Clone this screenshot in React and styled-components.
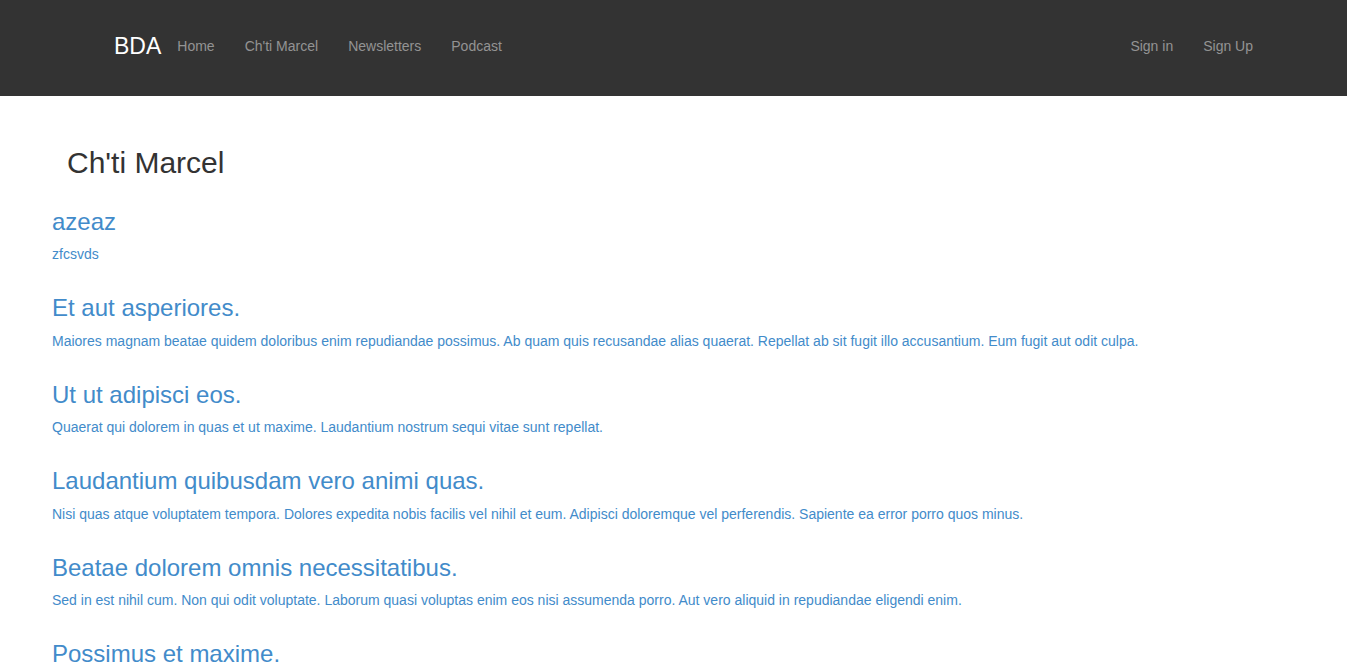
import React from 'react';
import styled, { createGlobalStyle } from 'styled-components';

const Global = createGlobalStyle`
  body {
    margin: 0;
    font-family: "Liberation Sans", Arial, Helvetica, sans-serif;
    font-size: 14px;
    line-height: 1.42857;
    color: #333;
    background: #fff;
  }
`;

const Navbar = styled.nav`
  background: #333333;
  height: 96px;
  box-sizing: border-box;
  padding: 0 79px 4px 114px;
  display: flex;
  align-items: center;
`;

const Brand = styled.a`
  color: #fff;
  font-size: 23px;
  line-height: 1;
  text-decoration: none;
  margin-right: 1px;
`;

const NavList = styled.ul`
  list-style: none;
  margin: 0;
  padding: 0;
  display: flex;
  margin-left: ${p => (p.right ? 'auto' : '0')};
`;

const NavLink = styled.a`
  display: block;
  padding: 0 15px;
  color: #939393;
  font-size: 14px;
  line-height: 20px;
  text-decoration: none;
`;

const Main = styled.main`
  padding: 30px 52px 0;
`;

const PageTitle = styled.h2`
  margin: 20px 0 10px 15px;
  font-size: 30px;
  font-weight: 500;
  line-height: 1.1;
  color: #333;
`;

const Post = styled.article`
  display: flow-root;
`;

const PostTitle = styled.h3`
  margin: 20px 0 10px;
  font-size: 24px;
  font-weight: 500;
  line-height: 1.1;
  color: #428bca;
`;

const PostBody = styled.p`
  margin: 0 0 10px;
  color: #428bca;
`;

const posts = [
  ['azeaz', 'zfcsvds'],
  [
    'Et aut asperiores.',
    'Maiores magnam beatae quidem doloribus enim repudiandae possimus. Ab quam quis recusandae alias quaerat. Repellat ab sit fugit illo accusantium. Eum fugit aut odit culpa.',
  ],
  [
    'Ut ut adipisci eos.',
    'Quaerat qui dolorem in quas et ut maxime. Laudantium nostrum sequi vitae sunt repellat.',
  ],
  [
    'Laudantium quibusdam vero animi quas.',
    'Nisi quas atque voluptatem tempora. Dolores expedita nobis facilis vel nihil et eum. Adipisci doloremque vel perferendis. Sapiente ea error porro quos minus.',
  ],
  [
    'Beatae dolorem omnis necessitatibus.',
    'Sed in est nihil cum. Non qui odit voluptate. Laborum quasi voluptas enim eos nisi assumenda porro. Aut vero aliquid in repudiandae eligendi enim.',
  ],
  ['Possimus et maxime.', null],
];

export default function App() {
  return (
    <>
      <Global />
      <Navbar>
        <Brand href="#">BDA</Brand>
        <NavList>
          <li><NavLink href="#">Home</NavLink></li>
          <li><NavLink href="#">Ch'ti Marcel</NavLink></li>
          <li><NavLink href="#">Newsletters</NavLink></li>
          <li><NavLink href="#">Podcast</NavLink></li>
        </NavList>
        <NavList right>
          <li><NavLink href="#">Sign in</NavLink></li>
          <li><NavLink href="#">Sign Up</NavLink></li>
        </NavList>
      </Navbar>
      <Main>
        <PageTitle>Ch'ti Marcel</PageTitle>
        {posts.map(([title, body]) => (
          <Post key={title}>
            <PostTitle>{title}</PostTitle>
            {body && <PostBody>{body}</PostBody>}
          </Post>
        ))}
      </Main>
    </>
  );
}
